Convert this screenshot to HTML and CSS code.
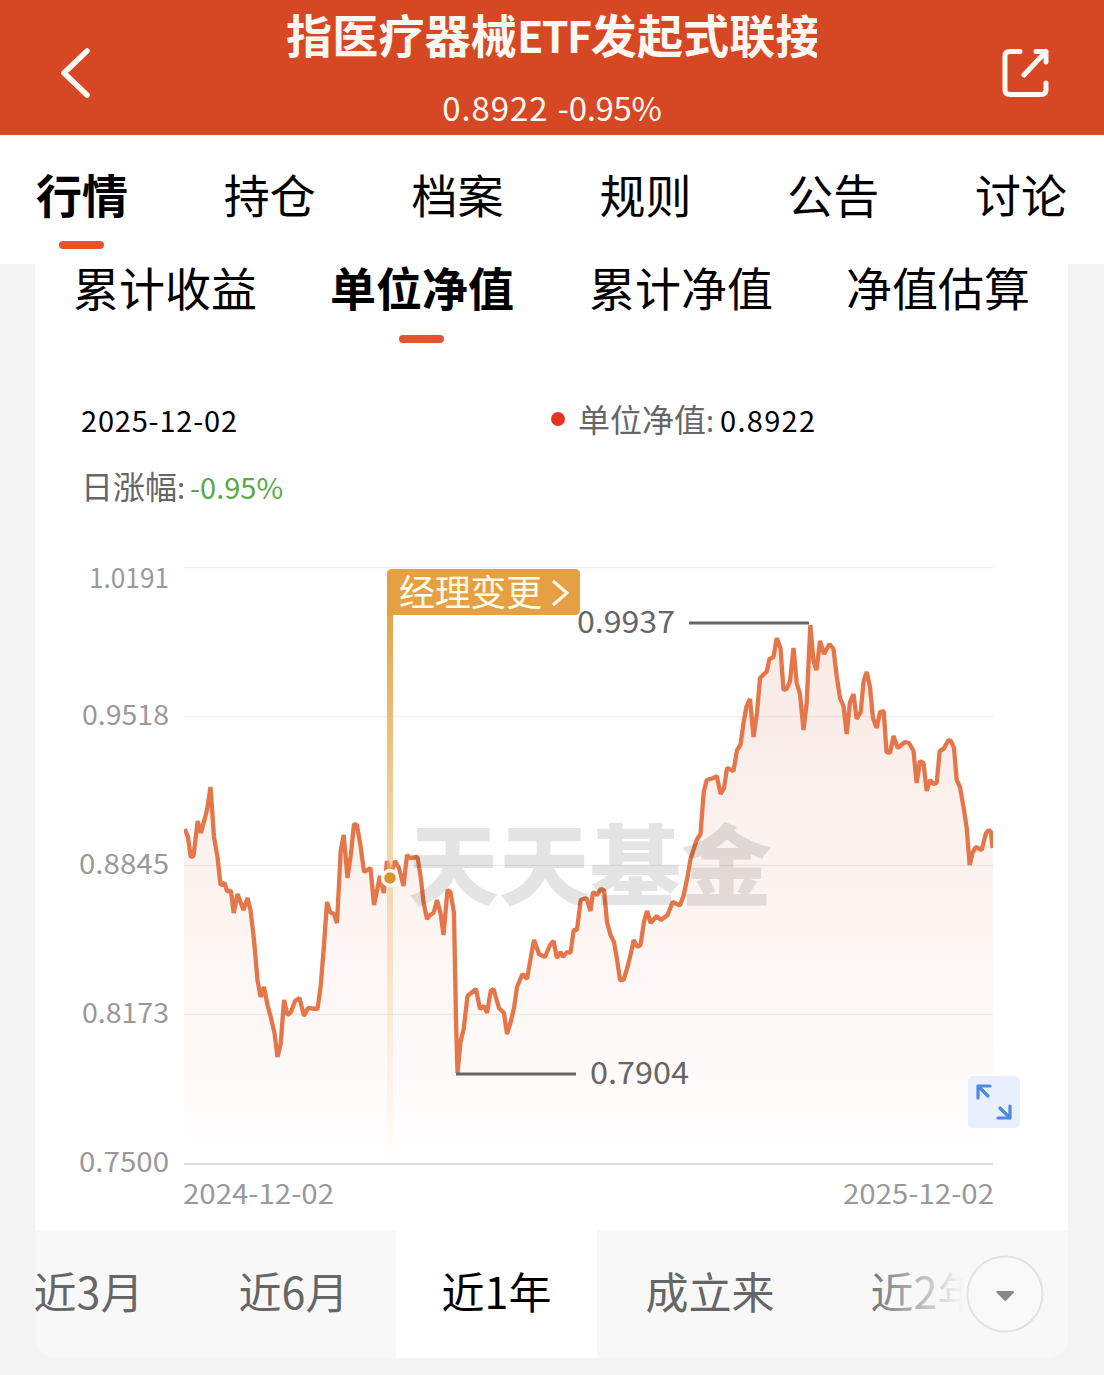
FILE: index.html
```html
<!DOCTYPE html>
<html lang="zh-CN">
<head>
<meta charset="utf-8">
<title>单位净值</title>
<link rel="stylesheet" href="styles.css">
</head>
<body>
<header class="header">
  <svg class="back" width="50" height="60" viewBox="0 0 50 60"><path d="M36 11 13 33 36 55"/></svg>
  <div class="heading">
    <h1 class="title">指医疗器械<span class="latin">ETF</span>发起式联接</h1>
    <p class="quote"><span class="quote-value">0.8922</span><span class="quote-change">-0.95%</span></p>
  </div>
  <svg class="share" width="60" height="60" viewBox="0 0 60 60"><path d="M25 11.500H15Q10 11.500 10 16V50Q10 54.500 15 54.500H46Q51 54.500 51 50V43M41 11.500H51V22M51 11.500 29 35"/></svg>
</header>
<nav class="tabs">
  <a class="tab active">行情</a><a class="tab">持仓</a><a class="tab">档案</a><a class="tab">规则</a><a class="tab">公告</a><a class="tab">讨论</a>
</nav>
<main class="card">
  <div class="subtabs">
    <a class="tab">累计收益</a><a class="tab active">单位净值</a><a class="tab">累计净值</a><a class="tab">净值估算</a>
  </div>
  <section class="summary">
    <div class="cell"><span class="date">2025-12-02</span></div>
    <div class="cell"><i class="dot"></i><span class="label">单位净值</span><span class="colon">:</span><span class="value">0.8922</span></div>
    <div class="cell"><span class="label">日涨幅</span><span class="colon">:</span><span class="change">-0.95%</span></div>
  </section>
  <svg class="chart" width="1033" height="700" viewBox="35 530 1033 700">
    <defs>
      <linearGradient id="area" x1="0" y1="624" x2="0" y2="1163" gradientUnits="userSpaceOnUse"><stop offset="0" stop-color="#f9e9e4"/><stop offset=".5" stop-color="#fcf4f1"/><stop offset="1" stop-color="#fffefe"/></linearGradient>
      <linearGradient id="pole" x1="0" y1="614" x2="0" y2="1160" gradientUnits="userSpaceOnUse"><stop offset="0" stop-color="#e4a545"/><stop offset="1" stop-color="#f4cf92" stop-opacity="0"/></linearGradient>
      <path id="nav-line" d="M184.7 829L188 837 190.7 857 193.5 856 197.7 821 201 833 207 810 210.5 787 214 837 217.5 857 220.5 885 224.5 883 227 891 231 891 233.7 913 237.5 894 243.5 910 247.5 898 250.5 910 254 940 257.5 980 260.5 997 264 987 267.5 1005 270.5 1016 274.5 1033 277.5 1057 280.7 1044 284 1000 287.5 1015 291 1012 295 1001 299.5 998 304 1016 308 1008 317.5 1009 320.7 986 324 945 327 902 330 912 334 914 337 923 340.7 851 343.7 835 347.5 878 350.7 856 354 824 357 825 360.7 847 364 872 370.5 868 374 905 380 876 383.7 893 387 861 390 876 395 861 399 868 403.5 886 407 855 410 858 417.5 857 420.7 877 423.5 902 427 919 430 915 433.5 913 437 900 440.5 913 443.5 935 447.5 890 450.5 892 454 913 456 1020 457.5 1073 460.5 1042 463.7 1029 467.5 996 476 989 480 1009 484 1006 487 1013 490.7 991 493.5 989 499 1008 504 1013 507 1034 510.7 1022 514 1008 517 987 522.5 974 527 979 530.7 958 534 940 539 954 545 957 550 945 553.5 941 557 958 560.5 952 563 957 567 952 570.5 953 573.7 930 577 930 580.7 900 586.5 898 590.5 911 593 892 597 895 600.7 889 604 890 607 922 610.5 935 614 942 617 959 620 980 623.5 980 627.5 967 630.7 954 633.7 940 637.5 947 640.5 945 644 921.5 647 911 650.7 923 656.7 916 661 920 667.5 915 672.7 902 680 905.5 683.7 895 687.5 877 690.5 859 696.7 840 700.5 834 703.7 792 706.7 780 713.5 778 716.7 776 720.7 794 724 788 727 768 733.5 771 737 750 740.5 745 743.5 723 746.5 706.5 750 699 753.5 737 757 713 760 678 766.7 671.5 769.5 659 773.5 657 776.7 638 780.5 648 783.5 690 786.5 689 790 681.5 793.5 648 796.7 683 800 694 803.5 730 806.7 703 810.3 625 813.5 661 816.5 670 820 641 824 654 829.5 644 833.5 649 836.7 676 840 698 843.5 706 846.7 734 850 702 853.5 694 856.7 719 860.7 712 863.5 682 866.7 672 870 687 873 718 876.7 728 880 712 883.7 711 886.5 752 890 753 893.5 736 897.7 748 905 742 909 743 913.5 751 916.7 783 920 761 923.5 763 926.7 791 930 780 933.5 784 936.7 783 939.7 751 943.5 749 948.5 740 951 741 954 748 956.7 780 960 787 963.5 807 966.7 828 969.7 865 972.5 853 975.7 847 981.7 850 986 833 989 830 991 832 992.5 848"/>
      <clipPath id="plot"><path d="M184 560H993V1164H184z"/></clipPath>
    </defs>
    <g clip-path="url(#plot)">
      <path fill="url(#area)" d="M184 829L188 837 190.7 857 193.5 856 197.7 821 201 833 207 810 210.5 787 214 837 217.5 857 220.5 885 227 891 231 891 233.7 913 237.5 894 243.5 910 247.5 898 250.5 910 254 940 257.5 980 260.5 997 264 987 270.5 1016 277.5 1057 280.7 1044 284 1000 287.5 1015 295 1001 299.5 998 304 1016 308 1008 317.5 1009 320.7 986 327 902 330 912 334 914 337 923 340.7 851 343.7 835 347.5 878 354 824 357 825 364 872 370.5 868 374 905 380 876 383.7 893 387 861 390 876 395 861 399 868 403.5 886 407 855 410 858 417.5 857 423.5 902 427 919 433.5 913 437 900 443.5 935 447.5 890 450.5 892 454 913 457.5 1073 463.7 1029 467.5 996 476 989 480 1009 487 1013 493.5 989 499 1008 504 1013 507 1034 514 1008 517 987 522.5 974 527 979 534 940 539 954 545 957 553.5 941 557 958 570.5 953 573.7 930 577 930 580.7 900 586.5 898 590.5 911 593 892 604 890 607 922 614 942 620 980 623.5 980 633.7 940 640.5 945 647 911 650.7 923 667.5 915 672.7 902 680 905.5 687.5 877 690.5 859 700.5 834 703.7 792 706.7 780 716.7 776 720.7 794 727 768 733.5 771 737 750 740.5 745 746.5 706.5 750 699 753.5 737 760 678 766.7 671.5 773.5 657 776.7 638 780.5 648 783.5 690 790 681.5 793.5 648 796.7 683 803.5 730 806.7 703 810.3 625 813.5 661 816.5 670 820 641 824 654 829.5 644 833.5 649 840 698 846.7 734 850 702 853.5 694 856.7 719 866.7 672 870 687 876.7 728 880 712 883.7 711 886.5 752 890 753 893.5 736 897.7 748 905 742 913.5 751 916.7 783 920 761 923.5 763 926.7 791 930 780 936.7 783 939.7 751 948.5 740 954 748 956.7 780 963.5 807 969.7 865 975.7 847 981.7 850 989 830 993 848V1163H184Z"/>
    </g>
    <g class="grid"><path d="M184 567.5H993M184 716.5H993M184 865.5H993M184 1014.5H993"/></g>
    <path class="axis" d="M184 1164H993"/>
    <g clip-path="url(#plot)"><use href="#nav-line" class="line"/></g>
    <text class="watermark" x="408" y="898" textLength="364" lengthAdjust="spacingAndGlyphs">天天基金</text>
    <path fill="url(#pole)" d="M387 612H393V1160H387z"/>
    <circle class="marker" cx="390" cy="878" r="7.5"/>
    <path class="leader" d="M689 623H809M456 1074H576"/>
    <g class="badge">
      <path class="badge-bg" d="M392 569H575Q580 569 580 574V610Q580 615 575 615H387V574Q387 569 392 569z"/>
      <text x="399" y="606" textLength="143">经理变更</text>
      <path class="badge-arrow" d="M553 581 567 593 553 605"/>
    </g>
    <g class="extreme">
      <text x="577" y="633" textLength="98" lengthAdjust="spacingAndGlyphs">0.9937</text>
      <text x="590" y="1084" textLength="99" lengthAdjust="spacingAndGlyphs">0.7904</text>
    </g>
    <g class="ticks">
      <text x="89" y="588" textLength="80" lengthAdjust="spacingAndGlyphs">1.0191</text>
      <text x="82" y="725" textLength="87" lengthAdjust="spacingAndGlyphs">0.9518</text>
      <text x="79" y="874" textLength="90" lengthAdjust="spacingAndGlyphs">0.8845</text>
      <text x="82" y="1023" textLength="87" lengthAdjust="spacingAndGlyphs">0.8173</text>
      <text x="79" y="1172" textLength="90" lengthAdjust="spacingAndGlyphs">0.7500</text>
      <text x="183" y="1204" textLength="151" lengthAdjust="spacingAndGlyphs">2024-12-02</text>
      <text x="843" y="1204" textLength="151" lengthAdjust="spacingAndGlyphs">2025-12-02</text>
    </g>
    <g class="expand">
      <rect x="968" y="1076" width="52" height="52" rx="5"/>
      <path d="M990 1086H978V1098M978 1086 988 1096M998 1118H1010V1106M1010 1118 1000 1108"/>
    </g>
  </svg>
  <div class="periods">
    <a class="period">近3月</a><a class="period">近6月</a><a class="period current">近1年</a><a class="period wide">成立来</a><a class="period">近2年</a>
    <div class="fade"><svg width="78" height="78" viewBox="0 0 78 78"><circle cx="39" cy="39" r="37.5"/><path d="M31.500 37H47L39.300 45z"/></svg></div>
  </div>
</main>
</body>
</html>
```
FILE: styles.css
```css
* { box-sizing: border-box; }
body {
  margin: 0;
  width: 1104px;
  height: 1375px;
  overflow: hidden;
  background: #f4f4f4;
  color: #000;
  font-family: "Noto Sans CJK SC", sans-serif;
}
.header {
  display: flex;
  height: 135px;
  padding: 6px 0 0 51px;
  background: #d64723;
}
.header svg { flex: none; fill: none; stroke: #fffaf5; stroke-width: 5.5; stroke-linecap: round; stroke-linejoin: round; }
.back { margin-top: 34px; }
.header .share { margin: 34px 0 0 178px; stroke-width: 5; }
.heading { width: 530px; margin-left: 186px; color: #fff8f2; text-align: center; }
.title {
  margin: 0;
  height: 56px;
  overflow-x: clip;
  white-space: nowrap;
  text-align: left;
  text-indent: -1px;
  font-size: 46px;
  line-height: 54px;
  letter-spacing: .2px;
}
.latin { font-size: 43px; letter-spacing: -1.6px; }
.quote {
  display: flex;
  justify-content: center;
  gap: 9px;
  margin: 18px 0 0;
  font-size: 33px;
  line-height: 54px;
}
.quote-value { letter-spacing: .9px; }
.quote-change { letter-spacing: -.3px; }
.tabs {
  display: flex;
  justify-content: space-between;
  height: 129px;
  padding: 25px 37px 0 36px;
  background: #fff;
}
.tab { position: relative; font-size: 46px; line-height: 66px; white-space: nowrap; }
.tab.active { font-weight: 700; }
.tab.active::after {
  content: "";
  position: absolute;
  left: 50%;
  bottom: -19px;
  width: 45px;
  height: 8px;
  margin-left: -23px;
  border-radius: 4px;
  background: #e6532c;
}
.tabs .tab { height: 70px; }
.card {
  width: 1033px;
  height: 1094px;
  margin-left: 35px;
  border-radius: 0 0 22px 22px;
  background: #fff;
}
.subtabs { display: flex; justify-content: space-between; height: 110px; padding: 0 38px 0 37px; }
.subtabs .tab { height: 70px; line-height: 44px; }
.subtabs .tab:first-child, .subtabs .tab:nth-child(3) { left: 1px; }
.subtabs .tab.active::after { bottom: -9px; }
.summary {
  display: grid;
  grid-template-columns: 469px 1fr;
  grid-auto-rows: 67px;
  height: 156px;
  padding: 11px 0 0 46px;
  font-size: 29px;
}
.cell { display: flex; align-items: center; }
.date { letter-spacing: .8px; }
.dot { width: 14px; height: 14px; margin: 0 13px 0 1px; border-radius: 50%; background: #e63323; }
.label { margin-bottom: 1px; color: #666; font-size: 32px; }
.colon { width: 14px; color: #666; }
.value { letter-spacing: 1.3px; }
.change { margin-left: -1px; color: #5aa946; }
.chart { display: block; }
.grid { fill: none; stroke: #000; stroke-opacity: .06; stroke-width: 1.4; }
.axis { stroke: #dcdcdc; stroke-width: 2; }
.line { fill: none; stroke: #e5764a; stroke-width: 4.3; stroke-linejoin: bevel; }
.watermark { fill: #000; fill-opacity: .105; font-size: 88px; font-weight: 900; }
.marker { fill: #d69330; stroke: #fffaf0; stroke-width: 3.4; }
.leader { stroke: #666; stroke-width: 3; }
.badge-bg { fill: #e6a044; }
.badge text { fill: #fffbe8; font-size: 36px; }
.badge-arrow { fill: none; stroke: #fffbe8; stroke-width: 3; }
.extreme { fill: #666; font-size: 30px; }
.ticks { fill: #999; font-size: 27px; }
.expand rect { fill: #e8effd; }
.expand path { fill: none; stroke: #5088df; stroke-width: 3.2; stroke-linecap: round; stroke-linejoin: round; }
.periods {
  position: relative;
  display: flex;
  height: 128px;
  overflow: hidden;
  border-radius: 0 0 22px 22px;
  background: #f8f8f8;
}
.period {
  flex: 0 0 205px;
  color: #666;
  font-size: 43px;
  line-height: 121px;
  text-align: center;
  white-space: nowrap;
}
.period:first-child { margin-left: -49px; }
.period.current { flex-basis: 201px; background: #fff; color: #000; }
.period.wide { flex-basis: 226px; }
.fade {
  position: absolute;
  right: 0;
  top: 0;
  display: flex;
  width: 208px;
  height: 128px;
  padding: 25px 0 0 106px;
  background: linear-gradient(90deg, rgba(248,248,248,0), #f8f8f8 50%);
}
.fade circle { fill: #f9f9f9; stroke: #e2e2e2; stroke-width: 2; }
.fade path { fill: #888; stroke: #888; stroke-width: 2; stroke-linejoin: round; }
```
